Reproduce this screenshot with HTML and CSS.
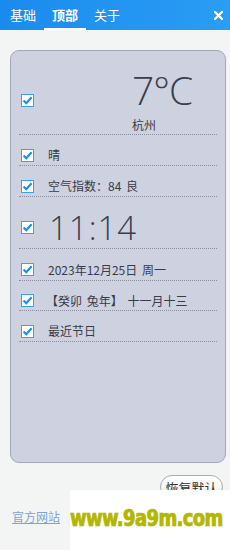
FILE: index.html
```html
<!DOCTYPE html>
<html lang="zh-CN">
<head>
<meta charset="utf-8">
<title>设置</title>
<link rel="stylesheet" href="styles.css">
</head>
<body>
<header class="topbar">
  <nav class="tabs">
    <span class="tab">基础</span>
    <span class="tab active">顶部</span>
    <span class="tab">关于</span>
  </nav>
  <span class="close">
    <svg width="9" height="9" viewBox="0 0 9 9"><path d="M1 1L8 8M8 1L1 8" stroke="#fff" stroke-width="2.2" stroke-linecap="square"/></svg>
  </span>
</header>
<main class="main">
  <section class="panel">
    <div class="row row-weather">
      <span class="cb"><svg width="11" height="11" viewBox="0 0 11 11"><path d="M1.6 5.4L4.3 8.2L9.6 2.3" fill="none" stroke="#1a8de6" stroke-width="2.1"/></svg></span>
      <div class="weather">
        <div class="temp">7°C</div>
        <div class="city">杭州</div>
      </div>
    </div>
    <div class="row">
      <span class="cb"><svg width="11" height="11" viewBox="0 0 11 11"><path d="M1.6 5.4L4.3 8.2L9.6 2.3" fill="none" stroke="#1a8de6" stroke-width="2.1"/></svg></span>
      <span class="txt">晴</span>
    </div>
    <div class="row">
      <span class="cb"><svg width="11" height="11" viewBox="0 0 11 11"><path d="M1.6 5.4L4.3 8.2L9.6 2.3" fill="none" stroke="#1a8de6" stroke-width="2.1"/></svg></span>
      <span class="txt">空气指数：84 良</span>
    </div>
    <div class="row row-clock">
      <span class="cb"><svg width="11" height="11" viewBox="0 0 11 11"><path d="M1.6 5.4L4.3 8.2L9.6 2.3" fill="none" stroke="#1a8de6" stroke-width="2.1"/></svg></span>
      <span class="clock">11:14</span>
    </div>
    <div class="row row-tall">
      <span class="cb"><svg width="11" height="11" viewBox="0 0 11 11"><path d="M1.6 5.4L4.3 8.2L9.6 2.3" fill="none" stroke="#1a8de6" stroke-width="2.1"/></svg></span>
      <span class="txt">2023年12月25日&nbsp;周一</span>
    </div>
    <div class="row row-short">
      <span class="cb"><svg width="11" height="11" viewBox="0 0 11 11"><path d="M1.6 5.4L4.3 8.2L9.6 2.3" fill="none" stroke="#1a8de6" stroke-width="2.1"/></svg></span>
      <span class="txt lunar">【癸卯&nbsp;兔年】&nbsp;十一月十三</span>
    </div>
    <div class="row">
      <span class="cb"><svg width="11" height="11" viewBox="0 0 11 11"><path d="M1.6 5.4L4.3 8.2L9.6 2.3" fill="none" stroke="#1a8de6" stroke-width="2.1"/></svg></span>
      <span class="txt">最近节日</span>
    </div>
  </section>
  <div class="actions">
    <button class="reset">恢复默认</button>
  </div>
  <a class="site" href="#">官方网站</a>
</main>
<div class="watermark"><span class="wm-text">www.9a9m.com</span></div>
</body>
</html>
```
FILE: styles.css
```css
* { box-sizing: border-box; }
html, body { margin: 0; padding: 0; }
body {
  width: 230px;
  height: 550px;
  overflow: hidden;
  background: #f3f5f4;
  font-family: "Noto Sans CJK SC", "Liberation Sans", sans-serif;
  color: #3a3b48;
  position: relative;
}
.topbar {
  height: 30px;
  background: linear-gradient(to right, #1a8bee, #2a9df5);
  display: flex;
  align-items: center;
  justify-content: space-between;
  padding: 0 7px 0 2px;
}
.tabs { display: flex; height: 30px; }
.tab {
  width: 42px;
  height: 30px;
  display: flex;
  align-items: center;
  justify-content: center;
  color: #fff;
  font-size: 13px;
  border-bottom: 2px solid transparent;
  padding-top: 1px;
}
.tab.active { font-weight: bold; border-bottom-color: #fff; }
.close { display: flex; width: 9px; height: 9px; margin-top: 1px; }
.main {
  padding: 20px 5px 0 10px;
  display: flex;
  flex-direction: column;
}
.panel {
  height: 413px;
  width: 216px;
  background: #ced2e0;
  border: 1px solid #a3a7b6;
  border-radius: 9px;
  display: flex;
  flex-direction: column;
}
.row {
  height: 31px;
  margin: 0 8px;
  padding: 10px 0 0 2px;
  border-bottom: 1px dotted #8b8e9c;
  display: flex;
  align-items: center;
}
.row-tall { height: 32px; }
.row-short { height: 30px; }
.row-weather { height: 84px; padding-top: 16px; }
.row-clock { height: 52px; }
.cb {
  width: 13px;
  height: 13px;
  flex: none;
  background: #fff;
  border: 1px solid #3aa3e8;
  display: flex;
  align-items: center;
  justify-content: center;
}
.txt { margin-left: 14px; font-size: 12px; line-height: 16px; word-spacing: 2px; }
.lunar { margin-left: 12px; }
.weather {
  margin-left: 98px;
  display: flex;
  flex-direction: column;
}
.temp {
  font-family: "Open Sans", sans-serif;
  font-weight: 300;
  font-size: 39px;
  line-height: 44px;
  color: #3c3d4a;
  letter-spacing: -1px;
}
.city { font-size: 12px; line-height: 16px; margin-top: 5px; }
.clock {
  margin-left: 15px;
  font-family: "Open Sans", sans-serif;
  font-weight: 300;
  font-size: 33px;
  line-height: 40px;
  color: #3c3d4a;
  letter-spacing: 1px;
}
.actions {
  display: flex;
  justify-content: flex-end;
  padding-right: 2px;
  margin-top: 12px;
}
.reset {
  height: 24px;
  width: 63px;
  padding: 0;
  border: 1px solid #ababab;
  border-radius: 12px;
  background: linear-gradient(#ffffff, #ececec);
  font-family: "Noto Sans CJK SC", sans-serif;
  font-size: 13px;
  color: #333;
}
.site {
  margin-top: 11px;
  margin-left: 2px;
  align-self: flex-start;
  font-size: 12px;
  line-height: 14px;
  color: #7aa2dc;
  text-decoration: underline;
}
.watermark {
  position: absolute;
  left: 70px;
  top: 490px;
  width: 160px;
  height: 60px;
  background: #fff;
  overflow: hidden;
}
.wm-text {
  position: absolute;
  left: 0;
  top: 16px;
  font-family: "DejaVu Sans Condensed", "DejaVu Sans", sans-serif;
  font-stretch: condensed;
  font-weight: bold;
  font-size: 20px;
  line-height: 22px;
  color: #b4b700;
  letter-spacing: -0.6px;
  white-space: nowrap;
  -webkit-text-stroke: 0.6px #b4b700;
  text-shadow: 0 0 1px #d8da80;
  transform-origin: 0 0;
  transform: scaleY(1.12);
}
```
